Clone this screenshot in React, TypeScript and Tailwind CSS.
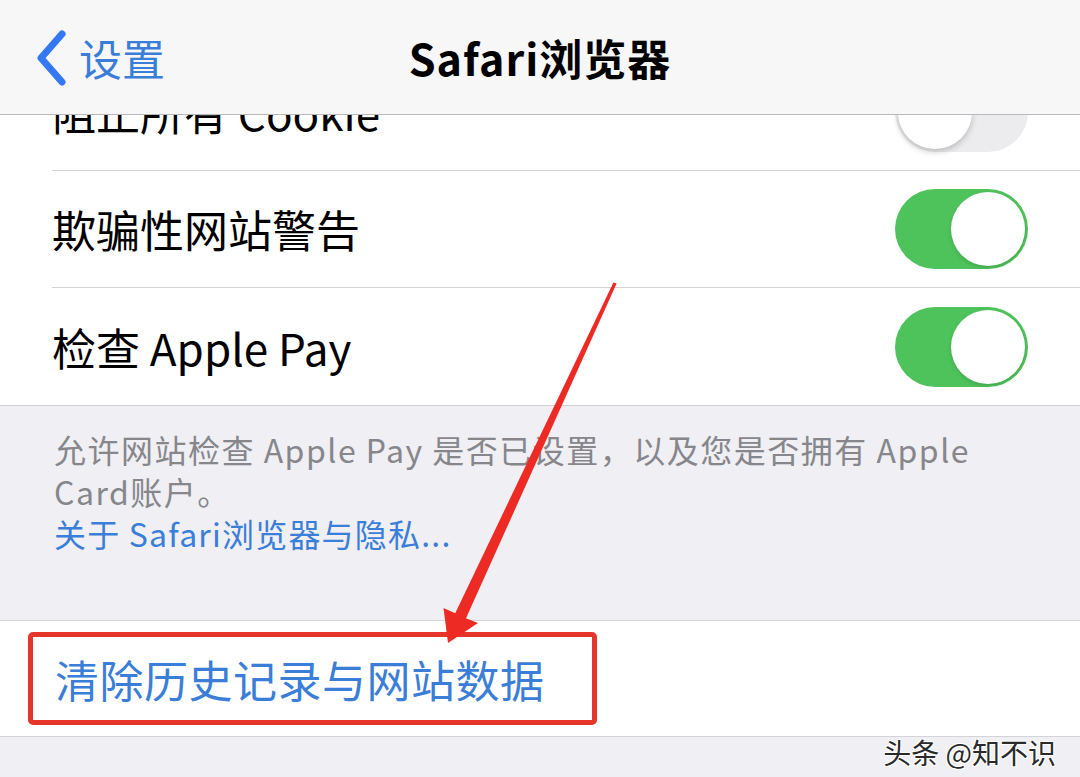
import React from "react";

const FONT = { fontFamily: '"Noto Sans CJK SC", "Noto Sans", sans-serif' };

function Toggle({ on }: { on: boolean }) {
  if (on) {
    return (
      <div className="w-[133px] h-[80px] rounded-full bg-[#4fc35b] flex items-center justify-end pr-[3px] shrink-0">
        <div className="w-[74px] h-[74px] rounded-full bg-white shadow-[0_2px_4px_rgba(0,0,0,0.15)]" />
      </div>
    );
  }
  return (
    <div className="w-[133px] h-[80px] rounded-full bg-[#ececef] flex items-center justify-start pl-[3px] shrink-0">
      <div className="w-[74px] h-[74px] rounded-full bg-white shadow-[0_3px_6px_rgba(0,0,0,0.2)]" />
    </div>
  );
}

function Row({ label, on, last }: { label: string; on: boolean; last?: boolean }) {
  return (
    <div className="pl-[52px] bg-white">
      <div
        className={
          "h-[117px] flex items-center justify-between pr-[52px] " +
          (last ? "" : "border-b border-[#d4d4d8]")
        }
      >
        <span className="text-[44px] text-black leading-none">{label}</span>
        <Toggle on={on} />
      </div>
    </div>
  );
}

export default function App() {
  return (
    <div className="relative w-[1080px] h-[777px] overflow-hidden bg-[#efeff4] flex flex-col" style={FONT}>
      {/* nav bar */}
      <div className="h-[115px] shrink-0 bg-[#f7f7f7] border-b border-[#b9b9bd] grid grid-cols-[1fr_auto_1fr] items-center">
        <div className="flex items-center pl-[35px]">
          <svg width="32" height="56" viewBox="0 0 32 56" className="mt-[2px] shrink-0">
            <polyline
              points="27,4 6,28 27,52"
              fill="none"
              stroke="#3478f6"
              strokeWidth="7"
              strokeLinecap="round"
              strokeLinejoin="round"
            />
          </svg>
          <span className="ml-[12px] text-[43px] leading-none text-[#3a7ed8]">设置</span>
        </div>
        <span className="text-[43px] leading-none font-bold text-black tracking-[1px]">Safari浏览器</span>
        <div />
      </div>

      {/* content (scrolled: first row partly under the nav bar) */}
      <div className="flex flex-col">
        <div className="h-[56px] overflow-hidden bg-white">
          <div className="-mt-[61px]">
            <Row label="阻止所有 Cookie" on={false} />
          </div>
        </div>
        <Row label="欺骗性网站警告" on={true} />
        <Row label="检查 Apple Pay" on={true} last />
        <div className="border-t border-[#cfcfd4] bg-[#efeff4] h-[215px] pl-[54px] pr-[30px] pt-[22px]">
          <p className="text-[32px] leading-[42px] text-[#86868b] tracking-[1.5px]">
            允许网站检查 Apple Pay 是否已设置，以及您是否拥有 Apple
            <br />
            Card账户。
          </p>
          <p className="text-[32px] leading-[42px] text-[#3a7ed8] tracking-[1.2px]">关于 Safari浏览器与隐私...</p>
        </div>
        <div className="border-t border-b border-[#d4d4d8] bg-white h-[117px] pl-[28px] flex items-center">
          <div className="w-[569px] h-[93px] border-[5px] border-[#e5362c] rounded-[5px] flex items-center pl-[22px]">
            <span className="text-[44px] leading-none text-[#3a7ed8] tracking-[0.5px]">清除历史记录与网站数据</span>
          </div>
        </div>
      </div>

      {/* red arrow annotation */}
      <svg className="absolute top-0 left-0" width="1080" height="777" viewBox="0 0 1080 777">
        <polygon
          points="448,643 478,623 466,618.3 616.6,283.6 613.4,282.4 455.2,613.3 443.5,608 448,643"
          fill="#ee2a24"
        />
      </svg>

      {/* watermark */}
      <div
        className="absolute right-[24px] bottom-[9px] text-[28px] leading-[32px] text-[#2a2a2a]"
        style={{ textShadow: "1px 1px 0 #fff, -1px -1px 0 #fff, 1px -1px 0 #fff, -1px 1px 0 #fff" }}
      >
        头条 @知不识
      </div>
    </div>
  );
}
